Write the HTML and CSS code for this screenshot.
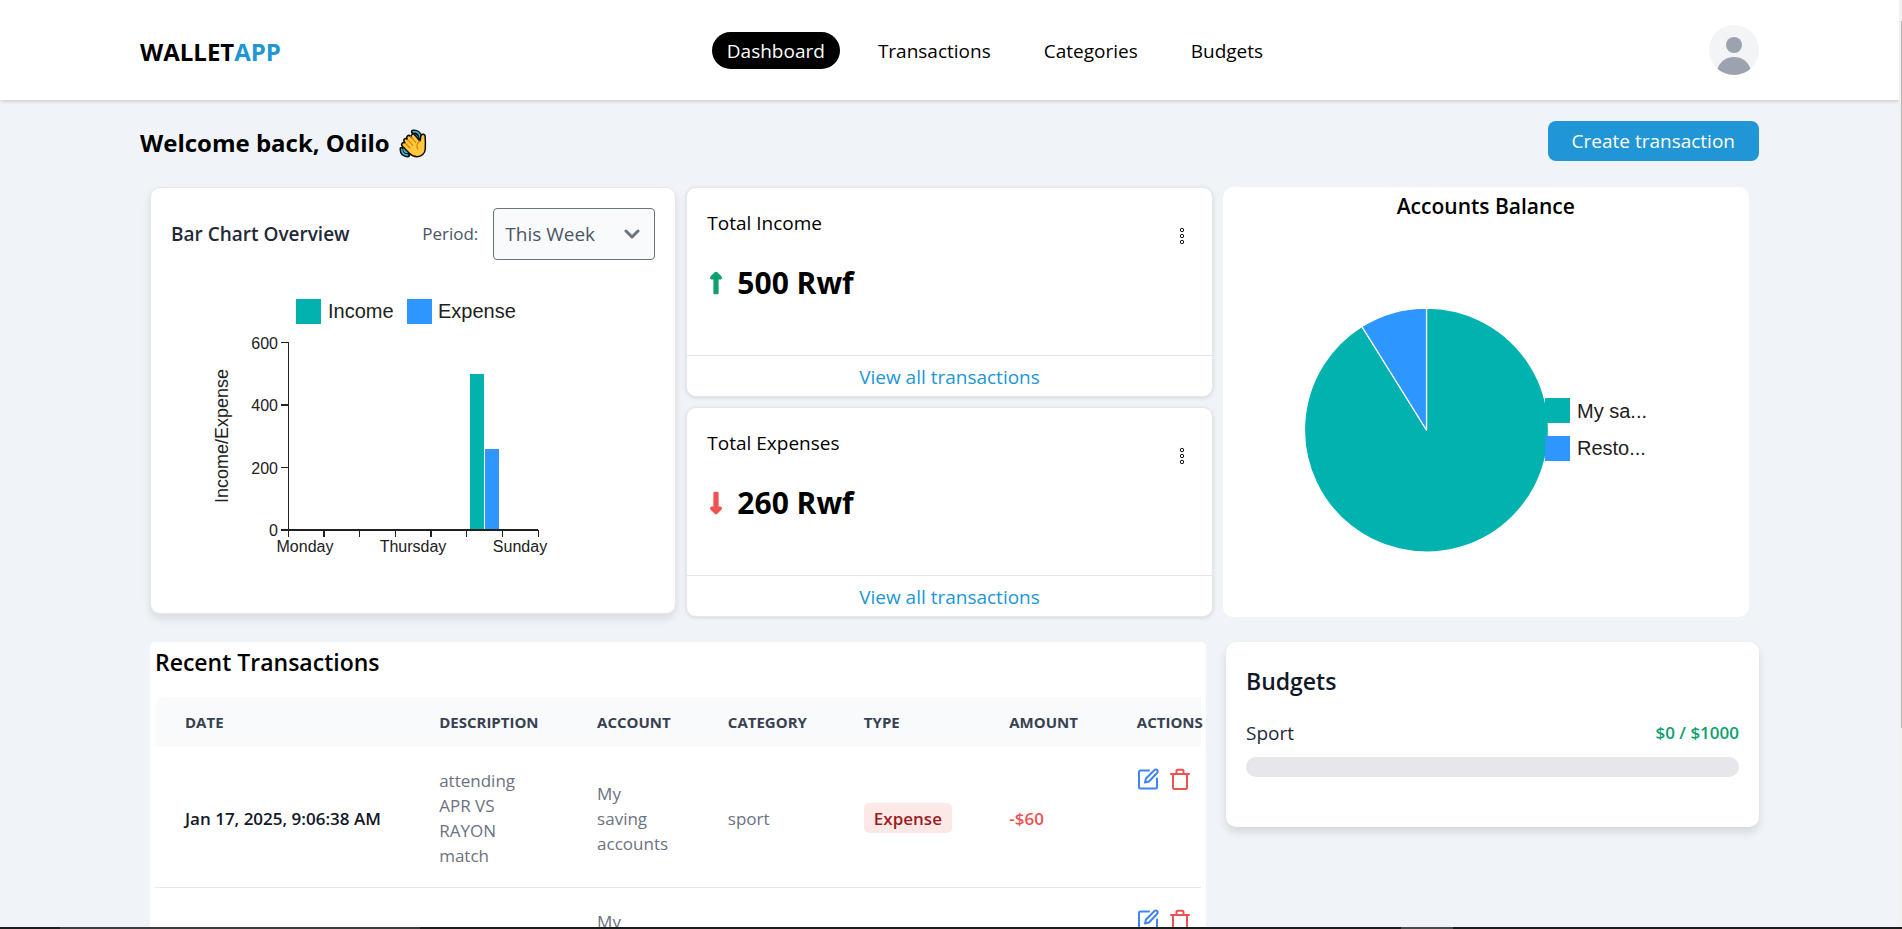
FILE: index.html
```html
<!DOCTYPE html>
<html lang="en">
<head>
<meta charset="utf-8">
<title>WalletApp</title>
<link rel="stylesheet" href="styles.css">
</head>
<body>
<div class="viewport">
  <div class="page">
    <header class="topbar">
      <a class="logo" href="#">WALLET<span class="logo-accent">APP</span></a>
      <nav class="nav">
        <a class="nav-link nav-link-active" href="#">Dashboard</a>
        <a class="nav-link" href="#">Transactions</a>
        <a class="nav-link" href="#">Categories</a>
        <a class="nav-link" href="#">Budgets</a>
      </nav>
      <button class="avatar" type="button" aria-label="Account">
        <svg viewBox="0 0 50 50" width="50" height="50"><circle cx="25" cy="20" r="8" fill="#9ca3af"/><path d="M8 45C11 36 17 32 25 32s14 4 17 13c-4 4-10 6-17 6s-13-2-17-6z" fill="#9ca3af"/></svg>
      </button>
    </header>

    <main class="content">
      <div class="welcome">
        <h1 class="welcome-title">Welcome back, Odilo
          <svg class="wave" viewBox="0 0 28 29" width="28" height="29" aria-hidden="true">
            <g fill="none" stroke="#0b0b0b" stroke-width="4.4" stroke-linecap="round"><path d="M14 2.800C18 2.200 21.200 5 21.600 9M2.600 20C2.600 24 5 26.400 9 26.200"/></g>
            <path d="M14.500 4c3 .2 5 2 5.600 5l-3-2zM4 20c.2 2.800 2 4.600 4.600 4.800L7 22z" fill="#0b0b0b"/>
            <g fill="none" stroke="#35b8d0" stroke-width="1.600" stroke-linecap="round"><path d="M14.200 2.700c3.800-.3 6.600 2 7.200 6M2.700 20.300c.1 3.600 2.300 5.800 5.900 5.800M14 5.600c2.200.2 3.800 1.400 4.400 3.400M5 20.500c.4 1.800 1.400 2.800 3 3"/></g>
            <path d="M3.200 14.200c.8-1.100 2-1 2.900-.2-1.600-1.900-1.700-3-.7-3.900 1-.9 2-.6 3 .4C7.400 8.900 7.500 7.800 8.400 7c1-.9 2.200-.6 3.100.4l1 1c-.6-1.200-.4-2.200.5-2.900 1-.7 2-.4 2.800.5l5.100 6c.7-.9.6-2.300.8-4.300.2-1.600 1.100-2.600 2.500-2.500 1.300.1 2 1.200 2 2.600.2 3.900.3 7.700.1 12-.2 4.700-3.700 8-8.300 8-3.400 0-5.400-1.300-7.700-3.600l-6.800-7c-1-1-1.100-2.100-.3-3z" fill="#ffc83d" stroke="#0b0b0b" stroke-width="1.500" stroke-linejoin="round"/>
            <path d="M6.100 14l4.800 5M8.400 10.500l5.100 5.600M11.500 7.400l5 6M20.900 12c-2.800 1.800-3.600 4.700-2.200 8" fill="none" stroke="#d67d00" stroke-width="1.100" stroke-linecap="round"/>
          </svg>
        </h1>
        <button class="btn-create" type="button">Create transaction</button>
      </div>

      <section class="overview">
        <article class="card chart-card">
          <div class="chart-head">
            <h2 class="chart-title">Bar Chart Overview</h2>
            <div class="period">
              <label class="period-label" for="period">Period:</label>
              <div class="select-wrap">
                <select class="period-select" id="period"><option>This Week</option></select>
                <svg class="chevron" viewBox="0 0 16 10" width="16" height="10"><path d="M2 2l6 6 6-6" fill="none" stroke="#6b7280" stroke-width="3" stroke-linecap="round" stroke-linejoin="round"/></svg>
              </div>
            </div>
          </div>
          <svg class="chart" viewBox="151 290 524 270" width="524" height="270" role="img" aria-label="Income and expense by day">
            <rect x="296" y="299" width="25" height="25" fill="#02b2af"/>
            <text class="legend-text" x="328" y="318">Income</text>
            <rect x="407" y="299" width="25" height="25" fill="#2e96ff"/>
            <text class="legend-text" x="438" y="318">Expense</text>
            <rect x="470" y="374" width="14" height="156" fill="#02b2af"/>
            <rect x="485" y="449" width="14" height="81" fill="#2e96ff"/>
            <g fill="none" stroke="#212121" shape-rendering="crispEdges">
              <path d="M288.500 342v195M281 342.500h8M281 467.500h8M359.500 530v7M395.500 530v7M466.500 530v7M502.500 530v7M538.500 530v7" stroke-width="1"/>
              <path d="M281 530h257M281 405h8M324 530v7M431 530v7" stroke-width="2"/>
            </g>
            <g class="tick-text" text-anchor="end">
              <text x="278" y="349">600</text><text x="278" y="411">400</text><text x="278" y="474">200</text><text x="278" y="536">0</text>
            </g>
            <g class="tick-text" text-anchor="middle">
              <text x="305" y="552">Monday</text><text x="413" y="552">Thursday</text><text x="520" y="552">Sunday</text>
            </g>
            <text class="axis-title" text-anchor="middle" transform="translate(228 436) rotate(-90)">Income/Expense</text>
          </svg>
        </article>

        <div class="stats">
          <article class="card stat">
            <div class="stat-body">
              <div class="stat-main">
                <h2 class="stat-title">Total Income</h2>
                <p class="stat-value">
                  <svg class="arrow" viewBox="0 0 256 512" width="18" height="24"><path fill="#0e9f6e" stroke="#0e9f6e" stroke-width="32" d="M88 166.059V468c0 6.627 5.373 12 12 12h56c6.627 0 12-5.373 12-12V166.059h46.059c21.382 0 32.09-25.851 16.971-40.971l-86.059-86.059c-9.373-9.373-24.569-9.373-33.941 0l-86.059 86.059c-15.119 15.119-4.411 40.971 16.971 40.971H88z"/></svg>
                  500 Rwf
                </p>
              </div>
              <button class="menu-btn" type="button" aria-label="Income menu"><svg viewBox="0 0 6 18" width="6" height="18" fill="none" stroke="#111" stroke-width="1"><circle cx="3" cy="3" r="1.700"/><circle cx="3" cy="9" r="1.700"/><circle cx="3" cy="15" r="1.700"/></svg></button>
            </div>
            <a class="stat-link" href="#">View all transactions</a>
          </article>
          <article class="card stat">
            <div class="stat-body">
              <div class="stat-main">
                <h2 class="stat-title">Total Expenses</h2>
                <p class="stat-value">
                  <svg class="arrow" viewBox="0 0 256 512" width="18" height="24"><path fill="#f05252" stroke="#f05252" stroke-width="32" d="M168 345.941V44c0-6.627-5.373-12-12-12h-56c-6.627 0-12 5.373-12 12v301.941H41.941c-21.382 0-32.09 25.851-16.971 40.971l86.059 86.059c9.373 9.373 24.569 9.373 33.941 0l86.059-86.059c15.119-15.119 4.411-40.971-16.971-40.971H168z"/></svg>
                  260 Rwf
                </p>
              </div>
              <button class="menu-btn" type="button" aria-label="Expenses menu"><svg viewBox="0 0 6 18" width="6" height="18" fill="none" stroke="#111" stroke-width="1"><circle cx="3" cy="3" r="1.700"/><circle cx="3" cy="9" r="1.700"/><circle cx="3" cy="15" r="1.700"/></svg></button>
            </div>
            <a class="stat-link" href="#">View all transactions</a>
          </article>
        </div>

        <article class="balance">
          <h2 class="balance-title">Accounts Balance</h2>
          <svg class="chart" viewBox="1223 300 526 260" width="526" height="260" role="img" aria-label="Balance by account">
            <g stroke="#fff" stroke-width="1.250" stroke-linejoin="round">
              <path d="M1426.500 430V308a122 122 0 1 1-64.600 18.500z" fill="#02b2af"/>
              <path d="M1426.500 430L1361.900 326.500A122 122 0 0 1 1426.500 308z" fill="#2e96ff"/>
            </g>
            <rect x="1545" y="398" width="25" height="25" fill="#02b2af"/>
            <text class="legend-text" x="1577" y="418">My sa...</text>
            <rect x="1545" y="436" width="25" height="25" fill="#2e96ff"/>
            <text class="legend-text" x="1577" y="455">Resto...</text>
          </svg>
        </article>
      </section>

      <section class="lower">
        <div class="recent">
          <h2 class="section-title">Recent Transactions</h2>
          <table class="table">
            <colgroup><col class="c-date"><col class="c-desc"><col class="c-acc"><col class="c-cat"><col class="c-type"><col class="c-amt"><col class="c-act"></colgroup>
            <thead>
              <tr><th>Date</th><th>Description</th><th>Account</th><th>Category</th><th>Type</th><th>Amount</th><th class="last">Actions</th></tr>
            </thead>
            <tbody>
              <tr>
                <td class="date">Jan 17, 2025, 9:06:38 AM</td>
                <td>attending APR VS RAYON match</td>
                <td>My saving accounts</td>
                <td>sport</td>
                <td><span class="badge">Expense</span></td>
                <td class="amount">-$60</td>
                <td class="last"><div class="actions">
                  <button class="icon-btn edit" type="button" aria-label="Edit"><svg viewBox="0 0 22 22" width="22" height="22"><path d="M12 2.500H3.500A1.500 1.500 0 0 0 2 4v15a1.500 1.500 0 0 0 1.500 1.500h15A1.500 1.500 0 0 0 20 19v-8.500M8 14.500l1-4 8.500-8.500a1.900 1.900 0 0 1 2.700 2.700L12 13.500z"/></svg></button>
                  <button class="icon-btn del" type="button" aria-label="Delete"><svg viewBox="0 0 22 22" width="22" height="22"><path d="M2 6h18M4 6v13.500a1.500 1.500 0 0 0 1.500 1.500h11a1.500 1.500 0 0 0 1.500-1.500V6M7.500 6V3A1.300 1.300 0 0 1 8.800 1.700h4.400A1.300 1.300 0 0 1 14.500 3v3"/></svg></button>
                </div></td>
              </tr>
              <tr>
                <td></td><td></td>
                <td>My saving accounts</td>
                <td></td><td></td><td></td>
                <td class="last"><div class="actions">
                  <button class="icon-btn edit" type="button" aria-label="Edit"><svg viewBox="0 0 22 22" width="22" height="22"><path d="M12 2.500H3.500A1.500 1.500 0 0 0 2 4v15a1.500 1.500 0 0 0 1.500 1.500h15A1.500 1.500 0 0 0 20 19v-8.500M8 14.500l1-4 8.500-8.500a1.900 1.900 0 0 1 2.700 2.700L12 13.500z"/></svg></button>
                  <button class="icon-btn del" type="button" aria-label="Delete"><svg viewBox="0 0 22 22" width="22" height="22"><path d="M2 6h18M4 6v13.500a1.500 1.500 0 0 0 1.500 1.500h11a1.500 1.500 0 0 0 1.500-1.500V6M7.500 6V3A1.300 1.300 0 0 1 8.800 1.700h4.400A1.300 1.300 0 0 1 14.500 3v3"/></svg></button>
                </div></td>
              </tr>
            </tbody>
          </table>
        </div>

        <aside class="budgets">
          <h2 class="section-title budgets-title">Budgets</h2>
          <div class="budget-row">
            <span class="budget-name">Sport</span>
            <span class="budget-value">$0 / $1000</span>
          </div>
          <div class="budget-track"></div>
        </aside>
      </section>
    </main>
  </div>
  <div class="scroll-edge"><div class="scroll-thumb"></div></div>
</div>
<div class="bottom-edge"><span class="edge-wide"></span><span class="edge-small"></span></div>
</body>
</html>
```
FILE: styles.css
```css
* { box-sizing: border-box; }

body {
  margin: 0;
  height: 100vh;
  display: flex;
  flex-direction: column;
  overflow: hidden;
  background: #f0f4f9;
  color: #000;
  font-family: "Open Sans", "Noto Sans", sans-serif;
  font-size: 19px;
  line-height: 30px;
}

h1, h2, p { margin: 0; }
a { color: inherit; text-decoration: none; }
button, select { font: inherit; cursor: pointer; }
button { border: 0; padding: 0; background: none; }
svg { display: block; flex: none; }

.viewport { flex: 1; min-height: 0; display: flex; }
.page { flex: 1; min-width: 0; overflow: hidden; }

/* Header */
.topbar {
  display: flex;
  align-items: center;
  justify-content: space-between;
  height: 100px;
  padding: 0 140px;
  background: #fff;
  box-shadow: 0 1px 4px rgba(0, 0, 0, 0.2);
}
.logo { padding-top: 3px; font-size: 24px; font-weight: 700; }
.logo-accent { color: #2196d6; }
.nav { display: flex; gap: 23px; }
.nav-link { padding: 4px 15px 3px; border-radius: 20px; }
.nav-link-active { background: #000; color: #fff; }
.avatar { border-radius: 50%; background: #f3f4f6; overflow: hidden; }

/* Welcome row */
.content { padding: 21px 140px; }
.welcome { display: flex; align-items: center; justify-content: space-between; margin-bottom: 26px; }
.welcome-title { display: flex; align-items: center; gap: 9px; padding-top: 4px; font-size: 24px; font-weight: 700; }
.btn-create {
  padding: 5px 24px;
  border-radius: 8px;
  background: #2196d6;
  color: #fff;
}

/* Overview */
.overview {
  display: grid;
  grid-template-columns: repeat(3, minmax(0, 1fr));
  gap: 10px;
  padding: 0 10px;
}
.card {
  border: 1px solid #e5e7eb;
  border-radius: 10px;
  background: #fff;
  box-shadow: 0 1px 4px rgba(0, 0, 0, 0.12);
}
.chart-card { align-self: start; padding-bottom: 53px; box-shadow: 0 5px 8px rgba(0, 0, 0, 0.1); }
.chart-head { display: flex; align-items: center; justify-content: space-between; padding: 20px 20px 30px; }
.chart-title { color: #1f2937; font-size: 19px; font-weight: 600; }
.period { display: flex; align-items: center; gap: 15px; }
.period-label { color: #4b5563; font-size: 17px; }
.select-wrap { display: grid; align-items: center; }
.period-select {
  grid-area: 1 / 1;
  width: 162px;
  height: 52px;
  padding: 0 11px;
  border: 1px solid #6b7280;
  border-radius: 4px;
  background: #f9fafb;
  color: #4b5563;
  appearance: none;
}
.chevron { grid-area: 1 / 1; justify-self: end; margin-right: 15px; pointer-events: none; }
.chart { margin: 0 auto; max-width: 100%; font-family: "Liberation Sans", Arial, sans-serif; fill: #212121; }
.legend-text { font-size: 20px; }
.tick-text { font-size: 16px; }
.axis-title { font-size: 18px; }

.stats { display: grid; gap: 10px; }
.stat { display: flex; flex-direction: column; height: 210px; }
.stat-body { flex: 1; display: flex; justify-content: space-between; padding: 20px; }
.stat-title { font-size: 19px; font-weight: 400; }
.stat-value { display: flex; align-items: center; gap: 12px; margin-top: 30px; font-size: 30px; font-weight: 700; }
.menu-btn { align-self: flex-start; padding: 19px 7px; }
.stat-link { padding: 6px 0 4px; border-top: 1px solid #e5e7eb; color: #2196d6; text-align: center; }

.balance { border-radius: 10px; background: #fff; }
.balance-title { padding: 4px 0 79px; font-size: 21px; font-weight: 600; text-align: center; }

/* Lower section */
.lower {
  display: grid;
  grid-template-columns: minmax(0, 2fr) minmax(0, 1fr);
  align-items: start;
  gap: 20px;
  margin-top: 25px;
}
.recent { margin-left: 10px; padding: 5px; border-radius: 5px; background: #fff; }
.section-title { font-size: 23px; font-weight: 600; }
.table {
  width: 100%;
  margin-top: 20px;
  border-collapse: collapse;
  table-layout: fixed;
  color: #6b7280;
  font-size: 17px;
  line-height: 25px;
  text-align: left;
}
.c-date { width: 24.3%; }
.c-desc { width: 15.1%; }
.c-acc { width: 12.5%; }
.c-cat { width: 13%; }
.c-type { width: 13.9%; }
.c-amt { width: 12.2%; }
.table th {
  height: 50px;
  padding: 0 30px;
  background: #f9fafb;
  color: #374151;
  font-size: 15px;
  font-weight: 700;
  text-transform: uppercase;
  white-space: nowrap;
}
.table th:first-child { border-top-left-radius: 10px; }
.table td { padding: 21px 30px 19px; }
.table tbody tr { border-bottom: 1px solid #e5e7eb; }
.table .date { color: #111827; font-weight: 600; white-space: nowrap; }
.table .amount { color: #f05252; font-weight: 600; }
.table .last { padding-right: 0; vertical-align: top; }
.table th.last { vertical-align: middle; }
.badge { display: inline-block; padding: 3px 10px 2px; border-radius: 5px; background: #fde8e8; color: #9b1c1c; font-weight: 600; }
.actions { display: flex; gap: 10px; }
.icon-btn svg { fill: none; stroke: currentColor; stroke-width: 2; stroke-linecap: round; stroke-linejoin: round; }
.edit { color: #3f83f8; }
.del { color: #f05252; }

.budgets { padding: 20px 20px 50px; border-radius: 10px; background: #fff; box-shadow: 0 5px 8px rgba(0, 0, 0, 0.12); }
.budgets-title { padding: 4px 0 22px; color: #111827; }
.budget-row { display: flex; align-items: center; justify-content: space-between; }
.budget-name { color: #1f2937; }
.budget-value { color: #0e9f6e; font-size: 17px; font-weight: 600; }
.budget-track { height: 20px; margin-top: 9px; border-radius: 10px; background: #e5e7eb; }

/* Window edges */
.scroll-edge { width: 3px; padding: 21px 0 0 2px; background: #f1f1f1; }
.scroll-thumb { height: 78%; background: #b5b5b5; }
.bottom-edge { display: flex; height: 2px; padding-left: 60px; background: #1c1c1c; }
.edge-wide { width: 360px; background: #3c3c3c; }
.edge-small { width: 52px; margin-left: 981px; background: #4a4a4a; }
```
